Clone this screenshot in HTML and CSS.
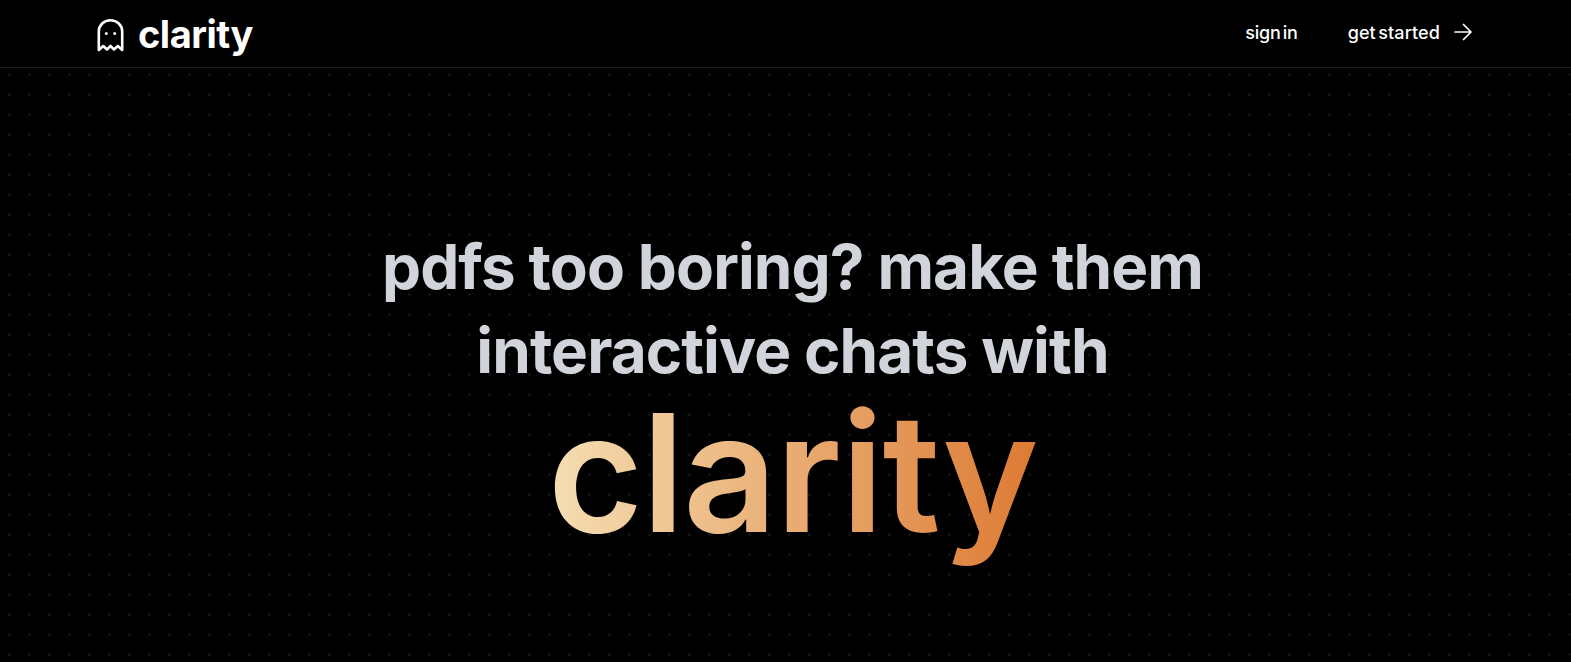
FILE: index.html
```html
<!DOCTYPE html>
<html lang="en">
<head>
    <meta charset="UTF-8">
    <meta name="viewport" content="width=device-width, initial-scale=1.0">
    <title>clarity</title>
    <link rel="stylesheet" href="styles.css">
</head>
<body>
    <header class="navbar">
        <div class="navbar-inner">
            <a class="logo" href="#">
                <svg class="logo-icon" width="27" height="34" viewBox="0 0 27 34" fill="none" stroke="currentColor" stroke-width="2.6" stroke-linejoin="round" stroke-linecap="round">
                    <path d="M1.8 32V13.5C1.8 7 7 2.3 13.5 2.3S25.2 7 25.2 13.5V32L20.8 28 17 31.5 13.5 28 10 31.5 6.2 28 1.8 32z"/>
                    <circle cx="9.3" cy="15.5" r="1.5" fill="currentColor" stroke="none"/>
                    <circle cx="17.7" cy="15.5" r="1.5" fill="currentColor" stroke="none"/>
                </svg>
                <span>clarity</span>
            </a>
            <nav class="nav-links">
                <a class="sign-in" href="#">sign in</a>
                <a class="get-started" href="#">
                    get started
                    <svg width="20" height="20" viewBox="0 0 20 20" fill="none" stroke="currentColor" stroke-width="1.7" stroke-linecap="round" stroke-linejoin="round">
                        <path d="M2 10h16M10.5 2.5 18 10l-7.5 7.5"/>
                    </svg>
                </a>
            </nav>
        </div>
    </header>

    <main class="hero">
        <h1>pdfs too boring? make them<br>interactive chats with</h1>
        <div class="hero-brand">clarity</div>
    </main>
</body>
</html>
```

FILE: styles.css
```css
* {
    box-sizing: border-box;
}
html, body {
    margin: 0;
    height: 100%;
}
body {
    background-color: #000;
    background-image: radial-gradient(circle, #212121 1px, transparent 1px);
    background-size: 20px 20px;
    background-position: -0.5px 4.5px;
    color: #fff;
    font-family: Inter, "Open Sans", sans-serif;
    overflow: hidden;
}
a {
    color: inherit;
    text-decoration: none;
}
.navbar {
    height: 68px;
    background-color: #000;
    border-bottom: 1px solid #1a1a22;
}
.navbar-inner {
    display: flex;
    align-items: center;
    justify-content: space-between;
    height: 100%;
    padding: 0 98px 0 97px;
}
.logo {
    display: flex;
    align-items: center;
    gap: 14px;
    font-size: 38px;
    font-weight: 700;
    letter-spacing: -0.5px;
}
.logo-icon {
    margin-top: 3px;
}
.nav-links {
    display: flex;
    align-items: center;
    gap: 50px;
    font-size: 18px;
    font-weight: 500;
    word-spacing: -2.5px;
    margin-bottom: 3px;
}
.sign-in {
    letter-spacing: -0.2px;
}
.get-started {
    display: flex;
    align-items: center;
    gap: 13px;
    letter-spacing: 0.1px;
}
.hero {
    display: flex;
    flex-direction: column;
    align-items: center;
    padding-top: 157px;
    padding-left: 14px;
    text-align: center;
}
.hero h1 {
    margin: 0;
    font-size: 62px;
    font-weight: 700;
    line-height: 84px;
    letter-spacing: -0.9px;
    color: #d1d5db;
}
.hero-brand {
    font-size: 164px;
    font-weight: 600;
    line-height: 160px;
    letter-spacing: -1.5px;
    padding-bottom: 40px;
    background-image: linear-gradient(to right, #f5deb3, #dd7a33);
    -webkit-background-clip: text;
    background-clip: text;
    color: transparent;
}
```
